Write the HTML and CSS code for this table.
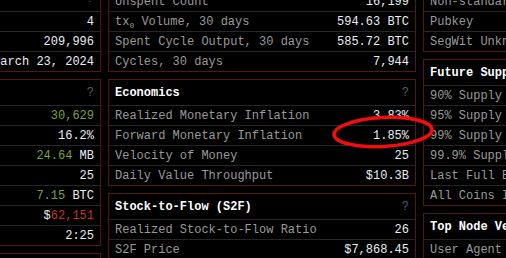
FILE: index.html
```html
<!DOCTYPE html>
<html>
<head>
<meta charset="utf-8">
<link rel="stylesheet" href="styles.css">
</head>
<body>
<div class="board">
  <div class="col col-a">
    <section class="panel">
      <div class="ph"><span class="pt">Blockchain</span><span class="q">?</span></div>
      <div class="row"><span class="k">Halvings</span><span class="v">4</span></div>
      <div class="row"><span class="k">Blocks Left</span><span class="v">209,996</span></div>
      <div class="row"><span class="k">Est. Date</span><span class="v">March 23, 2024</span></div>
    </section>
    <section class="panel">
      <div class="ph"><span class="pt">Mempool</span><span class="q">?</span></div>
      <div class="row"><span class="k">Transactions</span><span class="v g">30,629</span></div>
      <div class="row"><span class="k">Share</span><span class="v">16.2%</span></div>
      <div class="row"><span class="k">Size</span><span class="v"><span class="g">24.64</span> MB</span></div>
      <div class="row"><span class="k">Blocks</span><span class="v">25</span></div>
      <div class="row"><span class="k">Fees</span><span class="v"><span class="g">7.15</span> BTC</span></div>
      <div class="row"><span class="k">Value</span><span class="v">$<span class="r">62,151</span></span></div>
      <div class="row"><span class="k">Clear Time</span><span class="v">2:25</span></div>
    </section>
    <section class="panel">
      <div class="ph"><span class="pt">Lightning</span><span class="q">?</span></div>
    </section>
  </div>

  <div class="col">
    <section class="panel">
      <div class="ph"><span class="pt">UTXO Set</span><span class="q">?</span></div>
      <div class="row"><span class="k">UTXO Count</span><span class="v">98,112</span></div>
      <div class="row"><span class="k">Unspent Count</span><span class="v">16,199</span></div>
      <div class="row"><span class="k">tx<sub>0</sub> Volume, 30 days</span><span class="v">594.63 BTC</span></div>
      <div class="row"><span class="k">Spent Cycle Output, 30 days</span><span class="v">585.72 BTC</span></div>
      <div class="row"><span class="k">Cycles, 30 days</span><span class="v">7,944</span></div>
    </section>
    <section class="panel">
      <div class="ph"><span class="pt">Economics</span><span class="q">?</span></div>
      <div class="row"><span class="k">Realized Monetary Inflation</span><span class="v">3.83%</span></div>
      <div class="row"><span class="k">Forward Monetary Inflation</span><span class="v">1.85%</span></div>
      <div class="row"><span class="k">Velocity of Money</span><span class="v">25</span></div>
      <div class="row"><span class="k">Daily Value Throughput</span><span class="v">$10.3B</span></div>
    </section>
    <section class="panel">
      <div class="ph"><span class="pt">Stock-to-Flow (S2F)</span><span class="q">?</span></div>
      <div class="row"><span class="k">Realized Stock-to-Flow Ratio</span><span class="v">26</span></div>
      <div class="row"><span class="k">S2F Price</span><span class="v">$7,868.45</span></div>
    </section>
  </div>

  <div class="col">
    <section class="panel">
      <div class="ph"><span class="pt">Script Types</span><span class="q">?</span></div>
      <div class="row"><span class="k">Multisig</span><span class="v">0.2%</span></div>
      <div class="row"><span class="k">Non-standard</span><span class="v">0.0%</span></div>
      <div class="row"><span class="k">Pubkey</span><span class="v">0.0%</span></div>
      <div class="row"><span class="k">SegWit Unknown</span><span class="v">0.0%</span></div>
    </section>
    <section class="panel">
      <div class="ph"><span class="pt">Future Supply Milestones</span><span class="q">?</span></div>
      <div class="row"><span class="k">90% Supply</span><span class="v">2021</span></div>
      <div class="row"><span class="k">95% Supply</span><span class="v">2025</span></div>
      <div class="row"><span class="k">99% Supply</span><span class="v">2035</span></div>
      <div class="row"><span class="k">99.9% Supply</span><span class="v">2048</span></div>
      <div class="row"><span class="k">Last Full Epoch</span><span class="v">2136</span></div>
      <div class="row"><span class="k">All Coins Issued</span><span class="v">2140</span></div>
    </section>
    <section class="panel">
      <div class="ph"><span class="pt">Top Node Versions</span><span class="q">?</span></div>
      <div class="row"><span class="k">User Agent</span><span class="v">Share</span></div>
    </section>
  </div>
</div>

<svg class="mark" width="120" height="44" viewBox="0 0 120 44">
  <ellipse cx="60" cy="22" rx="49" ry="14.5" transform="rotate(-3 60 22)" fill="none" stroke="#f20d0d" stroke-width="3.6"/>
</svg>
</body>
</html>
```

FILE: styles.css
```css
html, body {
  margin: 0;
  padding: 0;
  background: #000;
  overflow: hidden;
}

body {
  width: 506px;
  height: 258px;
  position: relative;
  font-family: "Liberation Mono", "DejaVu Sans Mono", monospace;
  font-size: 12px;
  color: #9c9c9c;
}

.board {
  display: grid;
  grid-template-columns: repeat(3, 308px);
  column-gap: 7px;
  align-items: start;
  margin-left: -207px;
  margin-top: -55px;
}

.col {
  display: flex;
  flex-direction: column;
  gap: 7px;
}

.col-a {
  padding-top: 40px;
}

.panel {
  border: 1px solid #55170f;
  background: #000;
}

.ph {
  height: 25px;
  box-sizing: border-box;
  padding: 0 6px;
  display: flex;
  align-items: center;
  justify-content: space-between;
}

.pt {
  color: #ffffff;
  font-weight: bold;
}

.q {
  color: #5e5e5e;
}

.row {
  height: 20px;
  box-sizing: border-box;
  border-top: 1px solid #2a2424;
  padding: 0 6px;
  display: flex;
  align-items: center;
  justify-content: space-between;
  white-space: nowrap;
}

.k {
  color: #9a9a9a;
}

.k sub {
  font-size: 8px;
  line-height: 0;
  vertical-align: -3px;
}

.v {
  color: #e8edf3;
}

.g {
  color: #7ba13a;
}

.r {
  color: #c8331f;
}

.mark {
  position: absolute;
  left: 323px;
  top: 110px;
}
```
